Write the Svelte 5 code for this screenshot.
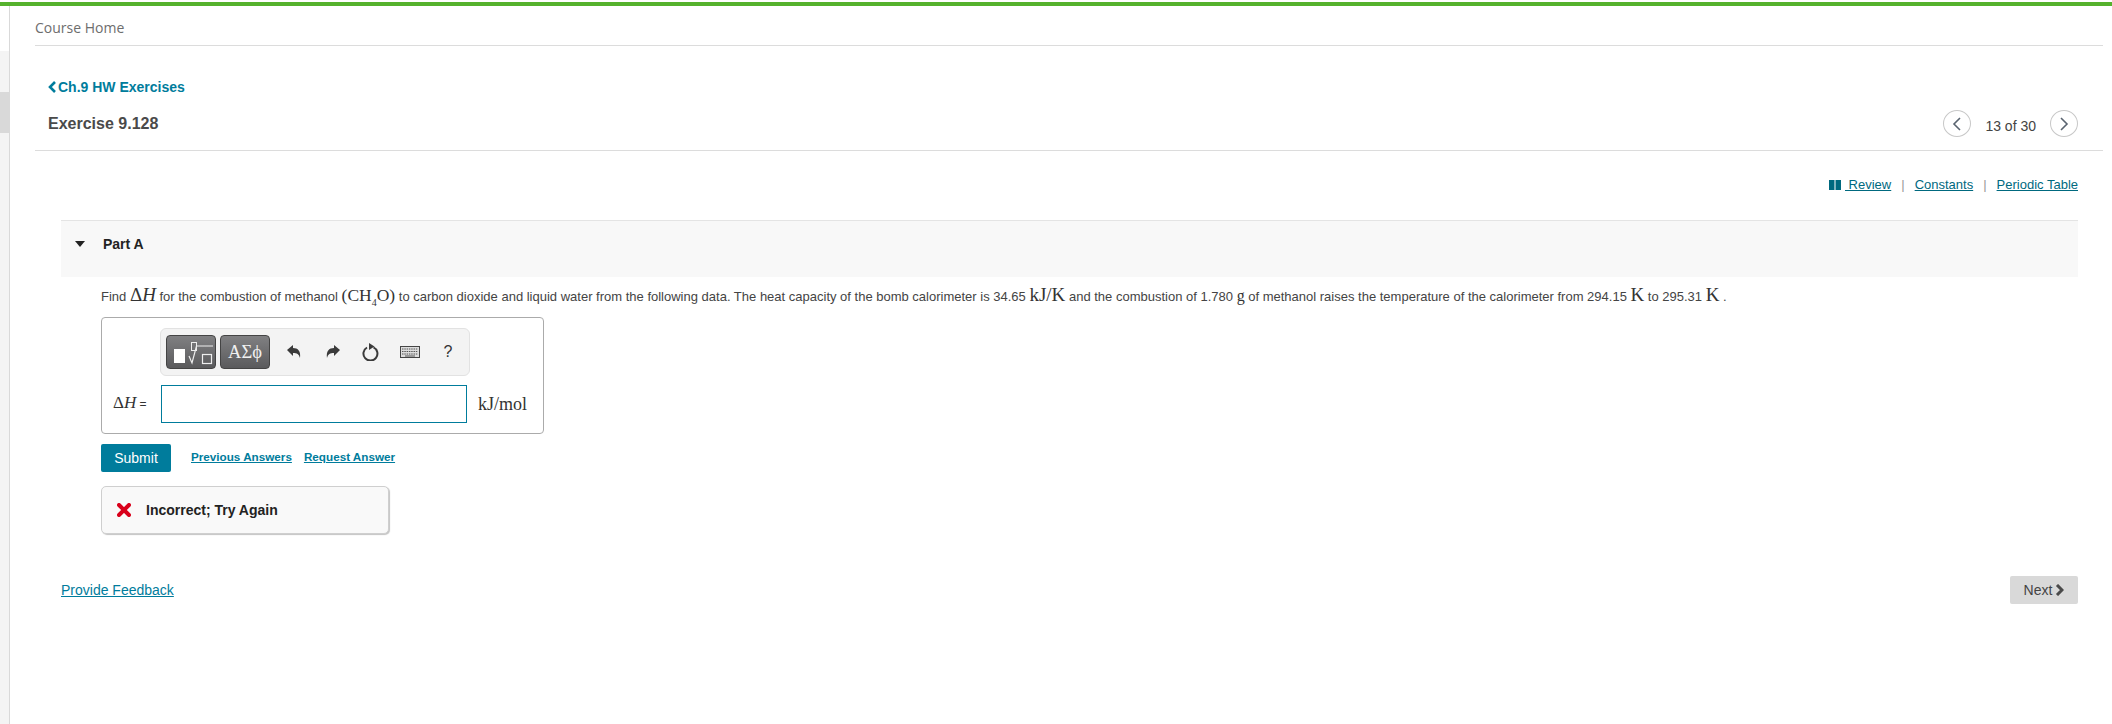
<script>
	const toolIcons = ['undo', 'redo', 'reset', 'keyboard', 'help'];
</script>

<div class="page">
	<aside class="rail">
		<div class="rail-item current"></div>
	</aside>

	<main>
		<nav class="crumb">Course Home</nav>

		<header class="title-bar">
			<div>
				<a class="back" href="#back">
					<svg width="9" height="12" viewBox="0 0 9 12"><path d="M7 1 2 6l5 5" fill="none" stroke="#007c9c" stroke-width="2.6" /></svg>
					Ch.9 HW Exercises
				</a>
				<h1>Exercise 9.128</h1>
			</div>
			<div class="pager">
				<button type="button" aria-label="Previous">
					<svg width="10" height="14" viewBox="0 0 10 14"><path d="M8 1 2 7l6 6" fill="none" stroke="#5a6470" stroke-width="1.6" /></svg>
				</button>
				<span>13 of 30</span>
				<button type="button" aria-label="Next">
					<svg width="10" height="14" viewBox="0 0 10 14"><path d="m2 1 6 6-6 6" fill="none" stroke="#5a6470" stroke-width="1.6" /></svg>
				</button>
			</div>
		</header>

		<div class="content">
			<div class="resources">
				<svg width="12" height="10" viewBox="0 0 12 10"><path d="M0 0h5.500v10H0zM6.500 0H12v10H6.500z" fill="#00697f" /></svg>
				<a href="#review">&nbsp;Review</a>
				<i>|</i>
				<a href="#constants">Constants</a>
				<i>|</i>
				<a href="#table">Periodic Table</a>
			</div>

			<section class="part">
				<div class="part-head">
					<span class="caret"></span>
					<strong>Part A</strong>
				</div>

				<div class="part-body">
					<p class="prompt">
						Find <span class="math">Δ<em>H</em></span> for the combustion of methanol
						<span class="math chem">(CH<sub>4</sub>O)</span> to carbon dioxide and liquid water from the following data.
						The heat capacity of the bomb calorimeter is 34.65 <span class="math">kJ/K</span> and the combustion of
						1.780 <span class="math small">g</span> of methanol raises the temperature of the calorimeter from 294.15
						<span class="math">K</span> to 295.31 <span class="math">K</span> .
					</p>

					<div class="answer">
						<div class="toolbar">
							<button class="tpl" type="button" aria-label="Templates">
								<svg width="50" height="34" viewBox="0 0 50 34">
									<rect x="7" y="13" width="11" height="14" fill="#fff" />
									<rect x="24.500" y="6.500" width="5" height="8" fill="none" stroke="#eee" />
									<path d="M22 20l3 7 4.500-17H46" fill="none" stroke="#eee" stroke-width="1.200" />
									<rect x="35.500" y="18.500" width="9" height="9" fill="none" stroke="#eee" stroke-width="1.200" />
								</svg>
							</button>
							<button class="tpl greek" type="button">ΑΣϕ</button>
							<div class="tools">
								{#each toolIcons as icon}
									<span class="tool">
										{#if icon === 'undo'}
											<svg width="16" height="16" viewBox="0 0 16 16"><path d="M1 6 7 1v3c5 0 8 3 7 10-1-4-3-5-7-5v3z" fill="#3a3a3a" /></svg>
										{:else if icon === 'redo'}
											<svg width="16" height="16" viewBox="0 0 16 16"><path d="M15 6 9 1v3C4 4 1 7 2 14c1-4 3-5 7-5v3z" fill="#3a3a3a" /></svg>
										{:else if icon === 'reset'}
											<svg width="18" height="18" viewBox="0 0 18 18"><path d="M5 4.500a7 7 0 1 0 6.500-.2" fill="none" stroke="#3a3a3a" stroke-width="2" /><path d="M7 0l5.500 3.500L7 7z" fill="#3a3a3a" /></svg>
										{:else if icon === 'keyboard'}
											<svg width="20" height="12" viewBox="0 0 20 12">
												<rect x=".5" y=".5" width="19" height="11" fill="#ddd" stroke="#444" />
												<path d="M2 3h16M2 5.500h16M2 8h16" stroke="#555" stroke-dasharray="1.500 .8" />
												<path d="M5 10h10" stroke="#555" />
											</svg>
										{:else}
											<b>?</b>
										{/if}
									</span>
								{/each}
							</div>
						</div>

						<div class="entry">
							<label for="dh"><span class="math">Δ<em>H</em></span> =</label>
							<input id="dh" type="text" />
							<span class="math unit">kJ/mol</span>
						</div>
					</div>

					<div class="actions">
						<button class="submit" type="button">Submit</button>
						<a href="#previous">Previous Answers</a>
						<a href="#request">Request Answer</a>
					</div>

					<div class="feedback">
						<svg width="14" height="14" viewBox="0 0 14 14"><path d="M2 2l10 10M12 2 2 12" stroke="#d9001b" stroke-width="4" stroke-linecap="round" /></svg>
						<strong>Incorrect; Try Again</strong>
					</div>
				</div>
			</section>

			<footer>
				<a href="#feedback">Provide Feedback</a>
				<button class="next" type="button">
					Next
					<svg width="9" height="12" viewBox="0 0 9 12"><path d="m2 1 5 5-5 5" fill="none" stroke="#4a4a4a" stroke-width="3" /></svg>
				</button>
			</footer>
		</div>
	</main>
</div>

<style>
	:global(body) {
		margin: 0;
		background: #fff;
		font-family: 'Liberation Sans', Arial, sans-serif;
		color: #333;
	}

	.page {
		display: flex;
		height: 724px;
		border-top: 2px solid #fff;
		box-sizing: border-box;
		overflow: hidden;
		position: relative;
	}

	.page::before {
		content: '';
		position: absolute;
		top: 0;
		left: 0;
		right: 0;
		height: 4px;
		background: #55b22d;
	}

	.rail {
		width: 9px;
		flex: none;
		padding-top: 90px;
		border-right: 1px solid #d9d9d9;
		background: linear-gradient(#fff 49px, #f4f4f4 49px);
	}

	.rail-item.current {
		height: 41px;
		background: #d9d9d9;
	}

	main {
		flex: 1;
		min-width: 0;
		padding: 0 9px 0 25px;
	}

	.crumb {
		height: 34px;
		padding-top: 9px;
		border-bottom: 1px solid #dcdcdc;
		color: #6d6d6d;
		font: 14px/34px 'Open Sans', sans-serif;
	}

	.title-bar {
		display: flex;
		align-items: flex-end;
		justify-content: space-between;
		height: 105px;
		padding: 0 25px 0 13px;
		box-sizing: border-box;
		border-bottom: 1px solid #dcdcdc;
	}

	.back {
		display: flex;
		align-items: center;
		gap: 1px;
		color: #007c9c;
		font-size: 14px;
		font-weight: bold;
		line-height: 16px;
		text-decoration: none;
	}

	h1 {
		margin: 20px 0 17px;
		color: #4a4a4a;
		font-size: 16px;
		font-weight: bold;
		line-height: 18px;
	}

	.pager {
		display: flex;
		align-items: center;
		gap: 14px;
		padding-bottom: 13px;
		color: #444;
		font-size: 14px;
	}

	.pager span {
		padding-top: 5px;
	}

	.pager button {
		display: grid;
		place-items: center;
		width: 28px;
		height: 27px;
		padding: 0;
		border: 1px solid #c8c8c8;
		border-radius: 50%;
		background: #fff;
	}

	.content {
		padding: 0 25px 0 26px;
	}

	.resources {
		display: flex;
		align-items: center;
		justify-content: flex-end;
		gap: 10px;
		height: 69px;
		padding-bottom: 2px;
		box-sizing: border-box;
		font-size: 13px;
	}

	.resources svg {
		margin-right: -6px;
	}

	.resources a {
		color: #00697f;
	}

	.resources i {
		font-style: normal;
		color: #999;
	}

	.part {
		border-top: 1px solid #e4e4e4;
	}

	.part-head {
		display: flex;
		align-items: flex-start;
		height: 56px;
		padding: 15px 0 0 14px;
		box-sizing: border-box;
		background: #f8f8f8;
		font-size: 14px;
		line-height: 16px;
		color: #222;
	}

	.caret {
		width: 0;
		height: 0;
		margin: 5px 18px 0 0;
		border: 5px solid transparent;
		border-top: 6px solid #222;
		border-bottom: 0;
	}

	.part-body {
		padding-left: 40px;
	}

	.prompt {
		margin: 0;
		height: 40px;
		padding-top: 10px;
		box-sizing: border-box;
		font-size: 13px;
		line-height: 20px;
		color: #444;
		white-space: nowrap;
	}

	.math {
		font-family: 'Liberation Serif', serif;
		font-size: 19px;
		line-height: 0;
		color: #333;
	}

	.math.chem {
		font-size: 17.500px;
	}

	.math.small {
		font-size: 16px;
	}

	.math em {
		font-style: italic;
	}

	.math sub {
		font-size: 10px;
		line-height: 0;
	}

	.answer {
		width: 443px;
		height: 117px;
		box-sizing: border-box;
		padding: 10px 0 0 11px;
		border: 1px solid #ababab;
		border-radius: 4px;
	}

	.toolbar {
		display: flex;
		align-items: center;
		gap: 4px;
		width: 310px;
		height: 48px;
		margin-left: 47px;
		padding-left: 5px;
		box-sizing: border-box;
		border: 1px solid #e2e2e2;
		border-radius: 6px;
		background: #f3f3f3;
	}

	.tpl {
		display: grid;
		place-items: center;
		width: 50px;
		height: 34px;
		padding: 0;
		border: 1px solid #444;
		border-radius: 4px;
		background: linear-gradient(#808082, #5a5a5c);
		color: #f0f0f0;
		font: 18.500px 'Liberation Serif', serif;
	}

	.tools {
		display: flex;
		align-items: center;
		gap: 18.500px;
		margin-left: 10px;
	}

	.tool {
		display: grid;
		place-items: center;
		width: 20px;
		height: 20px;
	}

	.tool b {
		font-size: 16px;
		font-weight: normal;
		color: #333;
	}

	.entry {
		display: flex;
		align-items: center;
		height: 38px;
		margin-top: 9px;
	}

	.entry label {
		width: 48px;
		flex: none;
		font-size: 12px;
		white-space: nowrap;
	}

	.entry .math {
		font-size: 17px;
	}

	input {
		width: 306px;
		height: 38px;
		padding: 0;
		box-sizing: border-box;
		border: 1px solid #007c9c;
		background: #fff;
	}

	.entry .unit {
		margin-left: 11px;
		font-size: 18px;
	}

	.actions {
		display: flex;
		align-items: flex-start;
		gap: 12px;
		margin-top: 10px;
	}

	.submit {
		width: 70px;
		height: 28px;
		margin-right: 8px;
		padding: 0;
		border: 0;
		border-radius: 2px;
		background: #007c9c;
		color: #fff;
		font: 14px 'Liberation Sans', sans-serif;
	}

	.actions a {
		margin-top: 6px;
		color: #007c9c;
		font-size: 11.700px;
		font-weight: bold;
		line-height: 14px;
	}

	.feedback {
		display: flex;
		align-items: center;
		gap: 15px;
		width: 288px;
		height: 48px;
		margin-top: 14px;
		padding-left: 15px;
		box-sizing: border-box;
		border: 1px solid #cfcfcf;
		border-radius: 5px;
		background: #f9f9f9;
		box-shadow: 1px 1px 1px #c4c4c4;
		font-size: 14px;
		color: #222;
	}

	footer {
		display: flex;
		align-items: center;
		justify-content: space-between;
		margin-top: 42px;
	}

	footer a {
		color: #007c9c;
		font-size: 14px;
	}

	.next {
		display: flex;
		align-items: center;
		justify-content: center;
		gap: 3px;
		width: 68px;
		height: 28px;
		padding: 0;
		border: 0;
		border-radius: 2px;
		background: #d9d9d9;
		color: #444;
		font: 14px 'Liberation Sans', sans-serif;
	}
</style>
